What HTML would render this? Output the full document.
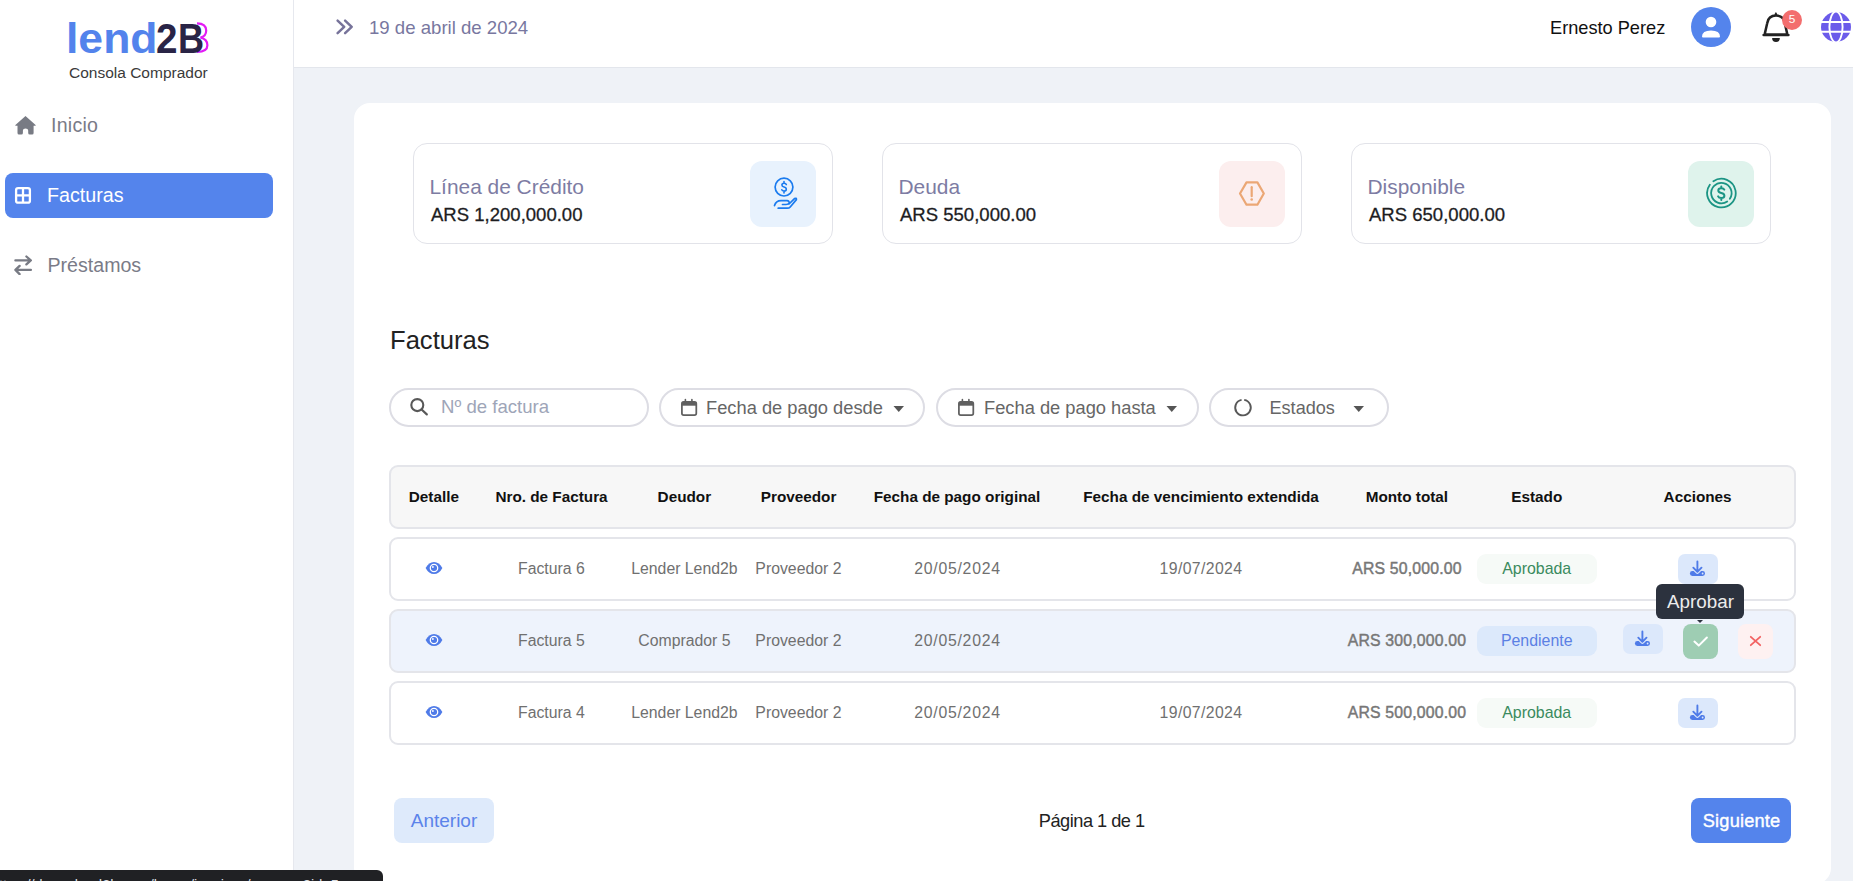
<!DOCTYPE html><html><head><meta charset="utf-8"><style>
html,body{margin:0;padding:0}
body{width:1853px;height:881px;overflow:hidden;position:relative;background:#EFF2F7;font-family:"Liberation Sans",sans-serif}
.t{position:absolute;white-space:nowrap;line-height:1}
.r{position:absolute;display:block}
</style></head><body>
<div class="r" style="left:0px;top:0px;width:293px;height:881px;background:#fff;border-radius:0px;"></div>
<div class="r" style="left:293px;top:0px;width:1px;height:881px;background:#E6E8EE;border-radius:0px;"></div>
<div class="r" style="left:294px;top:0px;width:1559px;height:67px;background:#fff;border-radius:0px;"></div>
<div class="r" style="left:294px;top:67px;width:1559px;height:1px;background:#E3E6EC;border-radius:0px;"></div>
<div class="r" style="left:354px;top:103px;width:1477px;height:781px;background:#fff;border-radius:16px;"></div>
<div class="t" style="left:66.3px;top:17.85px;font-size:42px;color:#5383EC;font-weight:700;transform:scaleX(1.06);transform-origin:0 0;">lend</div>
<div class="t" style="left:155.5px;top:17.85px;font-size:42px;color:#292446;font-weight:700;transform:scaleX(0.92);transform-origin:0 0;">2</div>
<svg class="r" style="left:190px;top:18px;" width="22" height="40" viewBox="0 0 22 40"><path d="M7 5.3 Q16.2 5.5 16.2 12.4 Q16.2 18 10.5 19.6 Q17.4 21 17.4 27.3 Q17.4 33.8 7 34" fill="none" stroke="#E21BF5" stroke-width="2.2"/></svg>
<div class="t" style="left:177.5px;top:17.85px;font-size:42px;color:#292446;font-weight:700;transform:scaleX(0.86);transform-origin:0 0;">B</div>
<div class="t" style="left:69px;top:64.68px;font-size:15.5px;color:#3A3A3A;font-weight:400;">Consola Comprador</div>
<svg class="r" style="left:14px;top:115px;" width="24" height="21" viewBox="0 0 24 21"><path d="M11.5 1 L21.6 10 Q22.2 10.8 21.3 10.8 L19.6 10.8 L19.6 18 Q19.6 19.5 18.1 19.5 L15.7 19.5 Q14.2 19.5 14.2 18 L14.2 15.5 Q14.2 13.5 11.55 13.5 Q8.9 13.5 8.9 15.5 L8.9 18 Q8.9 19.5 7.4 19.5 L5 19.5 Q3.5 19.5 3.5 18 L3.5 10.8 L1.7 10.8 Q0.8 10.8 1.4 10 Z" fill="#787B84"/></svg>
<div class="t" style="left:51px;top:116.01px;font-size:19.6px;color:#7A7B87;font-weight:400;letter-spacing:0.25px;">Inicio</div>
<div class="r" style="left:5px;top:173px;width:268px;height:45px;background:#5484EC;border-radius:8px;"></div>
<svg class="r" style="left:14px;top:186px;" width="18" height="19" viewBox="0 0 18 19"><rect x="2.1" y="2.1" width="13.8" height="14.6" rx="2" fill="none" stroke="#fff" stroke-width="2.3"/><line x1="9" y1="2" x2="9" y2="17" stroke="#fff" stroke-width="2.3"/><line x1="2" y1="9.4" x2="16" y2="9.4" stroke="#fff" stroke-width="2.3"/></svg>
<div class="t" style="left:47px;top:185.92px;font-size:19.7px;color:#fff;font-weight:400;">Facturas</div>
<svg class="r" style="left:14px;top:255px;" width="19" height="20" viewBox="0 0 19 20"><path d="M1.4 5.4 H16.8 M12.4 1.5 L16.8 5.4 L12.4 9.4 M16.9 14.9 H1.4 M5.6 10.9 L1.4 14.9 L5.6 19.1" fill="none" stroke="#787B84" stroke-width="2.3" stroke-linecap="round" stroke-linejoin="round"/></svg>
<div class="t" style="left:47.5px;top:255.91px;font-size:19.6px;color:#7A7B87;font-weight:400;">Préstamos</div>
<svg class="r" style="left:334px;top:17px;" width="21" height="20" viewBox="0 0 21 20"><path d="M3.6 3.6 L10.2 9.9 L3.6 16.2 M11.1 3.6 L17.7 9.9 L11.1 16.2" fill="none" stroke="#77739A" stroke-width="2.5" stroke-linecap="round" stroke-linejoin="round"/></svg>
<div class="t" style="left:369px;top:18.86px;font-size:18.6px;color:#7877A0;font-weight:400;">19 de abril de 2024</div>
<div class="t" style="left:1550px;top:19.09px;font-size:18.2px;color:#111;font-weight:400;">Ernesto Perez</div>
<svg class="r" style="left:1691px;top:7px;" width="40" height="40" viewBox="0 0 40 40"><circle cx="20" cy="20" r="20" fill="#5484EC"/><circle cx="20" cy="15" r="5.3" fill="#fff"/><path d="M11 29.5 Q11 23.5 20 23.5 Q29 23.5 29 29.5 Q29 30.5 28 30.5 L12 30.5 Q11 30.5 11 29.5 Z" fill="#fff"/></svg>
<svg class="r" style="left:1760px;top:10px;" width="32" height="34" viewBox="0 0 32 34"><path d="M15.9 1.9 Q17.4 3.4 17.4 5.8 L14.4 5.8 Q14.4 3.4 15.9 1.9 Z" fill="#222"/><path d="M4.6 24.6 L7.2 13.2 Q8.4 5.6 16 5.6 Q23.6 5.6 24.8 13.2 L27.4 24.6 Z M3.6 24.9 H28.4" fill="none" stroke="#222" stroke-width="2.5" stroke-linejoin="round" stroke-linecap="round"/><path d="M12.1 28 H19.9 Q19.9 32 16 32 Q12.1 32 12.1 28 Z" fill="#222"/></svg>
<svg class="r" style="left:1782px;top:10px;" width="20" height="20" viewBox="0 0 20 20"><circle cx="10" cy="10" r="10" fill="#F36E6E"/></svg>
<div class="t" style="left:1792.00px;transform:translateX(-50%);top:14.21px;font-size:11.8px;color:#fff;font-weight:400;">5</div>
<svg class="r" style="left:1820px;top:11px;" width="32" height="32" viewBox="0 0 32 32"><circle cx="16" cy="16" r="15" fill="#6B5BEA"/><path d="M1 11 H31 M1 20.8 H31" stroke="#fff" stroke-width="1.9"/><ellipse cx="16" cy="16" rx="6.6" ry="15.5" fill="none" stroke="#fff" stroke-width="1.9"/></svg>
<div class="r" style="left:413px;top:142.5px;width:420px;height:101.0px;background:#fff;border-radius:14px;border:1.5px solid #E2E3E9;box-sizing:border-box;"></div>
<div class="t" style="left:429.5px;top:177.11px;font-size:20.9px;color:#7D7CA3;font-weight:400;">Línea de Crédito</div>
<div class="t" style="left:431px;top:205.90px;font-size:18.55px;color:#1D1D1F;font-weight:400;-webkit-text-stroke:0.3px #1D1D1F;">ARS 1,200,000.00</div>
<div class="r" style="left:750px;top:161px;width:66px;height:66px;background:#E8F2FD;border-radius:12px;"></div>
<div class="r" style="left:882px;top:142.5px;width:420px;height:101.0px;background:#fff;border-radius:14px;border:1.5px solid #E2E3E9;box-sizing:border-box;"></div>
<div class="t" style="left:898.5px;top:177.11px;font-size:20.9px;color:#7D7CA3;font-weight:400;">Deuda</div>
<div class="t" style="left:900px;top:205.90px;font-size:18.55px;color:#1D1D1F;font-weight:400;-webkit-text-stroke:0.3px #1D1D1F;">ARS 550,000.00</div>
<div class="r" style="left:1219px;top:161px;width:66px;height:66px;background:#FCEEEE;border-radius:12px;"></div>
<div class="r" style="left:1351px;top:142.5px;width:420px;height:101.0px;background:#fff;border-radius:14px;border:1.5px solid #E2E3E9;box-sizing:border-box;"></div>
<div class="t" style="left:1367.5px;top:177.11px;font-size:20.9px;color:#7D7CA3;font-weight:400;">Disponible</div>
<div class="t" style="left:1369px;top:205.90px;font-size:18.55px;color:#1D1D1F;font-weight:400;-webkit-text-stroke:0.3px #1D1D1F;">ARS 650,000.00</div>
<div class="r" style="left:1688px;top:161px;width:66px;height:66px;background:#DFF3EC;border-radius:12px;"></div>
<svg class="r" style="left:772px;top:175px;" width="26" height="36" viewBox="0 0 26 36"><circle cx="12" cy="12.1" r="8.9" fill="none" stroke="#1A7BEF" stroke-width="1.7"/><path d="M14.3 9.6 Q13.9 8.3 12 8.3 Q9.9 8.3 9.9 10.1 Q9.9 11.6 12 12 Q14.3 12.5 14.3 14.2 Q14.3 16 12 16 Q10.2 16 9.8 14.8 M12 6.6 V8.3 M12 16 V17.9" fill="none" stroke="#1A7BEF" stroke-width="1.6" stroke-linecap="round"/><path d="M2.5 30.6 Q4 25.7 9 25.7 L15 25.7 Q17.5 25.9 17 28 Q16.5 29.5 14 29.5 L10.5 29.5 M17 29 L22.5 23.6 Q24.6 22.5 24.4 24.6 L18.2 32 Q17.2 33.2 15.2 33.2 L6.2 33.2" fill="none" stroke="#1A7BEF" stroke-width="1.7" stroke-linecap="round" stroke-linejoin="round"/></svg>
<svg class="r" style="left:1238px;top:180px;" width="28" height="28" viewBox="0 0 28 28"><path d="M8.5 2.4 L19.4 2.4 L25.8 13.55 L19.4 24.7 L8.5 24.7 L2 13.55 Z" fill="none" stroke="#EBA775" stroke-width="2.2" stroke-linejoin="round"/><path d="M13.7 7.2 V16.2" stroke="#EBA775" stroke-width="2.2" stroke-linecap="round"/><circle cx="13.7" cy="19.5" r="1.3" fill="#EBA775"/></svg>
<svg class="r" style="left:1705px;top:177px;" width="32" height="32" viewBox="0 0 32 32"><path d="M8.40 4.24 A14.3 14.3 0 1 1 4.83 7.69" fill="none" stroke="#1B9484" stroke-width="1.8" stroke-linecap="round"/><path d="M22.25 24.46 A10.2 10.2 0 1 1 24.86 21.80" fill="none" stroke="#1B9484" stroke-width="1.8" stroke-linecap="round"/><path d="M19.3 12.6 Q18.7 11.2 16.3 11.2 Q13.3 11.2 13.3 13.5 Q13.3 15.3 16.3 15.9 Q19.4 16.5 19.4 18.7 Q19.4 20.9 16.3 20.9 Q13.8 20.9 13.1 19.3 M16.3 9.5 V11.2 M16.3 20.9 V22.9" fill="none" stroke="#1B9484" stroke-width="2" stroke-linecap="round"/></svg>
<div class="t" style="left:390px;top:327.73px;font-size:25.6px;color:#222;font-weight:400;">Facturas</div>
<div class="r" style="left:389px;top:388px;width:260px;height:39px;background:#fff;border-radius:20px;border:2px solid #DDDDE4;box-sizing:border-box;"></div>
<div class="r" style="left:659px;top:388px;width:266px;height:39px;background:#fff;border-radius:20px;border:2px solid #DDDDE4;box-sizing:border-box;"></div>
<div class="r" style="left:936px;top:388px;width:263px;height:39px;background:#fff;border-radius:20px;border:2px solid #DDDDE4;box-sizing:border-box;"></div>
<div class="r" style="left:1209px;top:388px;width:180px;height:39px;background:#fff;border-radius:20px;border:2px solid #DDDDE4;box-sizing:border-box;"></div>
<svg class="r" style="left:409px;top:397px;" width="21" height="20" viewBox="0 0 21 20"><circle cx="8.3" cy="8.1" r="6" fill="none" stroke="#585858" stroke-width="2.1"/><path d="M12.6 12.5 L17.8 17.4" stroke="#585858" stroke-width="2.2" stroke-linecap="round"/></svg>
<div class="t" style="left:441px;top:398.46px;font-size:18.6px;color:#9EA5B8;font-weight:400;">Nº de factura</div>
<svg class="r" style="left:680px;top:398px;" width="18" height="19" viewBox="0 0 18 19"><rect x="1.9" y="3.9" width="14.4" height="13.2" rx="1.8" fill="none" stroke="#606060" stroke-width="1.75"/><rect x="1.9" y="3.9" width="14.4" height="3.8" fill="#606060"/><path d="M5.4 1.6 V4.2 M11.9 1.6 V4.2" stroke="#606060" stroke-width="1.6" stroke-linecap="round"/></svg>
<div class="t" style="left:706px;top:398.81px;font-size:18.3px;color:#666;font-weight:400;">Fecha de pago desde</div>
<svg class="r" style="left:893px;top:405px;" width="12" height="8" viewBox="0 0 12 8"><path d="M0.5 1 L11 1 L5.75 7 Z" fill="#555"/></svg>
<svg class="r" style="left:956.5px;top:398px;" width="18" height="19" viewBox="0 0 18 19"><rect x="1.9" y="3.9" width="14.4" height="13.2" rx="1.8" fill="none" stroke="#606060" stroke-width="1.75"/><rect x="1.9" y="3.9" width="14.4" height="3.8" fill="#606060"/><path d="M5.4 1.6 V4.2 M11.9 1.6 V4.2" stroke="#606060" stroke-width="1.6" stroke-linecap="round"/></svg>
<div class="t" style="left:984px;top:398.81px;font-size:18.3px;color:#666;font-weight:400;">Fecha de pago hasta</div>
<svg class="r" style="left:1166px;top:405px;" width="12" height="8" viewBox="0 0 12 8"><path d="M0.5 1 L11 1 L5.75 7 Z" fill="#555"/></svg>
<svg class="r" style="left:1233px;top:398px;" width="20" height="20" viewBox="0 0 20 20"><path d="M11.22 1.90 A7.8 7.8 0 1 1 8.57 1.93" fill="none" stroke="#585858" stroke-width="1.9"/></svg>
<div class="t" style="left:1269.5px;top:399.18px;font-size:18.1px;color:#666;font-weight:400;">Estados</div>
<svg class="r" style="left:1353px;top:405px;" width="12" height="8" viewBox="0 0 12 8"><path d="M0.5 1 L11 1 L5.75 7 Z" fill="#555"/></svg>
<div class="r" style="left:389px;top:465px;width:1407px;height:64px;background:#F7F7F7;border-radius:9px;border:2px solid #E4E5EA;box-sizing:border-box;"></div>
<div class="t" style="left:433.90px;transform:translateX(-50%);top:489.25px;font-size:15.3px;color:#111;font-weight:700;">Detalle</div>
<div class="t" style="left:551.50px;transform:translateX(-50%);top:489.25px;font-size:15.3px;color:#111;font-weight:700;">Nro. de Factura</div>
<div class="t" style="left:684.40px;transform:translateX(-50%);top:489.25px;font-size:15.3px;color:#111;font-weight:700;">Deudor</div>
<div class="t" style="left:798.60px;transform:translateX(-50%);top:489.25px;font-size:15.3px;color:#111;font-weight:700;">Proveedor</div>
<div class="t" style="left:957.00px;transform:translateX(-50%);top:489.25px;font-size:15.3px;color:#111;font-weight:700;">Fecha de pago original</div>
<div class="t" style="left:1201.00px;transform:translateX(-50%);top:489.25px;font-size:15.3px;color:#111;font-weight:700;">Fecha de vencimiento extendida</div>
<div class="t" style="left:1406.90px;transform:translateX(-50%);top:489.25px;font-size:15.3px;color:#111;font-weight:700;">Monto total</div>
<div class="t" style="left:1536.80px;transform:translateX(-50%);top:489.25px;font-size:15.3px;color:#111;font-weight:700;">Estado</div>
<div class="t" style="left:1697.60px;transform:translateX(-50%);top:489.25px;font-size:15.3px;color:#111;font-weight:700;">Acciones</div>
<div class="r" style="left:389px;top:537px;width:1407px;height:64px;background:#fff;border-radius:9px;border:2px solid #E4E5EA;box-sizing:border-box;"></div>
<svg class="r" style="left:424.5px;top:561.4px;" width="18" height="14" viewBox="0 0 18 14"><path d="M0.6 7 Q3.8 0.9 9 0.9 Q14.2 0.9 17.4 7 Q14.2 13.1 9 13.1 Q3.8 13.1 0.6 7 Z" fill="#4F7BE8"/><circle cx="9" cy="7" r="3.7" fill="none" stroke="#fff" stroke-width="1.3"/><circle cx="9" cy="7" r="2.5" fill="#4F7BE8"/><circle cx="7.9" cy="6" r="0.9" fill="#fff"/></svg>
<div class="t" style="left:551.40px;transform:translateX(-50%);top:560.53px;font-size:15.8px;color:#707070;font-weight:400;">Factura 6</div>
<div class="t" style="left:684.40px;transform:translateX(-50%);top:560.53px;font-size:15.8px;color:#707070;font-weight:400;">Lender Lend2b</div>
<div class="t" style="left:798.40px;transform:translateX(-50%);top:560.53px;font-size:15.8px;color:#707070;font-weight:400;">Proveedor 2</div>
<div class="t" style="left:957.48px;transform:translateX(-50%);top:560.53px;font-size:15.8px;color:#707070;font-weight:400;letter-spacing:0.75px;">20/05/2024</div>
<div class="t" style="left:1200.99px;transform:translateX(-50%);top:560.53px;font-size:15.8px;color:#707070;font-weight:400;letter-spacing:0.38px;">19/07/2024</div>
<div class="t" style="left:1406.99px;transform:translateX(-50%);top:560.53px;font-size:15.8px;color:#777;font-weight:400;letter-spacing:0.18px;-webkit-text-stroke:0.45px #777;">ARS 50,000.00</div>
<div class="r" style="left:1477px;top:554px;width:120px;height:30px;background:#F6FAF7;border-radius:9px;"></div>
<div class="t" style="left:1536.70px;transform:translateX(-50%);top:561.44px;font-size:15.9px;color:#3A8A5E;font-weight:400;">Aprobada</div>
<svg class="r" style="left:1678px;top:554px;" width="40" height="30" viewBox="0 0 40 30"><rect width="40" height="30" rx="7" fill="#DCE8FB"/><rect x="11.9" y="17.1" width="15.1" height="4.8" rx="2.4" fill="#4F7BE8"/><path d="M15.1 13.6 L19.4 17.9 L23.7 13.6" fill="none" stroke="#DCE8FB" stroke-width="4" stroke-linecap="round" stroke-linejoin="round"/><path d="M19.4 7.4 V17.4 M15.3 13.7 L19.4 17.8 L23.5 13.7" fill="none" stroke="#4F7BE8" stroke-width="1.9" stroke-linecap="round" stroke-linejoin="round"/><circle cx="24.6" cy="19.5" r="0.9" fill="#DCE8FB"/></svg>
<div class="r" style="left:389px;top:609px;width:1407px;height:64px;background:#EEF3FC;border-radius:9px;border:2px solid #E4E5EA;box-sizing:border-box;"></div>
<svg class="r" style="left:424.5px;top:633.4px;" width="18" height="14" viewBox="0 0 18 14"><path d="M0.6 7 Q3.8 0.9 9 0.9 Q14.2 0.9 17.4 7 Q14.2 13.1 9 13.1 Q3.8 13.1 0.6 7 Z" fill="#4F7BE8"/><circle cx="9" cy="7" r="3.7" fill="none" stroke="#fff" stroke-width="1.3"/><circle cx="9" cy="7" r="2.5" fill="#4F7BE8"/><circle cx="7.9" cy="6" r="0.9" fill="#fff"/></svg>
<div class="t" style="left:551.40px;transform:translateX(-50%);top:632.53px;font-size:15.8px;color:#707070;font-weight:400;">Factura 5</div>
<div class="t" style="left:684.40px;transform:translateX(-50%);top:632.53px;font-size:15.8px;color:#707070;font-weight:400;">Comprador 5</div>
<div class="t" style="left:798.40px;transform:translateX(-50%);top:632.53px;font-size:15.8px;color:#707070;font-weight:400;">Proveedor 2</div>
<div class="t" style="left:957.48px;transform:translateX(-50%);top:632.53px;font-size:15.8px;color:#707070;font-weight:400;letter-spacing:0.75px;">20/05/2024</div>
<div class="t" style="left:1406.99px;transform:translateX(-50%);top:632.53px;font-size:15.8px;color:#777;font-weight:400;letter-spacing:0.18px;-webkit-text-stroke:0.45px #777;">ARS 300,000.00</div>
<div class="r" style="left:1477px;top:626px;width:120px;height:30px;background:#DCE9FB;border-radius:9px;"></div>
<div class="t" style="left:1536.70px;transform:translateX(-50%);top:633.44px;font-size:15.9px;color:#5B80E4;font-weight:400;">Pendiente</div>
<svg class="r" style="left:1623px;top:624px;" width="40" height="30" viewBox="0 0 40 30"><rect width="40" height="30" rx="7" fill="#DCE8FB"/><rect x="11.9" y="17.1" width="15.1" height="4.8" rx="2.4" fill="#4F7BE8"/><path d="M15.1 13.6 L19.4 17.9 L23.7 13.6" fill="none" stroke="#DCE8FB" stroke-width="4" stroke-linecap="round" stroke-linejoin="round"/><path d="M19.4 7.4 V17.4 M15.3 13.7 L19.4 17.8 L23.5 13.7" fill="none" stroke="#4F7BE8" stroke-width="1.9" stroke-linecap="round" stroke-linejoin="round"/><circle cx="24.6" cy="19.5" r="0.9" fill="#DCE8FB"/></svg>
<div class="r" style="left:1683px;top:624px;width:35px;height:35px;background:#9ECDB3;border-radius:8px;"></div>
<svg class="r" style="left:1692px;top:635px;" width="17" height="13" viewBox="0 0 17 13"><path d="M2.4 6.6 L6.75 10.6 L14.9 2.5" fill="none" stroke="#fff" stroke-width="2" stroke-linecap="round" stroke-linejoin="round"/></svg>
<div class="r" style="left:1738px;top:624px;width:35px;height:35px;background:#FEF1F1;border-radius:8px;"></div>
<svg class="r" style="left:1749px;top:635px;" width="13" height="12" viewBox="0 0 13 12"><path d="M1.8 1.8 L11.2 10.2 M11.2 1.8 L1.8 10.2" fill="none" stroke="#F26262" stroke-width="1.8" stroke-linecap="round"/></svg>
<div class="r" style="left:389px;top:681px;width:1407px;height:64px;background:#fff;border-radius:9px;border:2px solid #E4E5EA;box-sizing:border-box;"></div>
<svg class="r" style="left:424.5px;top:705.4px;" width="18" height="14" viewBox="0 0 18 14"><path d="M0.6 7 Q3.8 0.9 9 0.9 Q14.2 0.9 17.4 7 Q14.2 13.1 9 13.1 Q3.8 13.1 0.6 7 Z" fill="#4F7BE8"/><circle cx="9" cy="7" r="3.7" fill="none" stroke="#fff" stroke-width="1.3"/><circle cx="9" cy="7" r="2.5" fill="#4F7BE8"/><circle cx="7.9" cy="6" r="0.9" fill="#fff"/></svg>
<div class="t" style="left:551.40px;transform:translateX(-50%);top:704.53px;font-size:15.8px;color:#707070;font-weight:400;">Factura 4</div>
<div class="t" style="left:684.40px;transform:translateX(-50%);top:704.53px;font-size:15.8px;color:#707070;font-weight:400;">Lender Lend2b</div>
<div class="t" style="left:798.40px;transform:translateX(-50%);top:704.53px;font-size:15.8px;color:#707070;font-weight:400;">Proveedor 2</div>
<div class="t" style="left:957.48px;transform:translateX(-50%);top:704.53px;font-size:15.8px;color:#707070;font-weight:400;letter-spacing:0.75px;">20/05/2024</div>
<div class="t" style="left:1200.99px;transform:translateX(-50%);top:704.53px;font-size:15.8px;color:#707070;font-weight:400;letter-spacing:0.38px;">19/07/2024</div>
<div class="t" style="left:1406.99px;transform:translateX(-50%);top:704.53px;font-size:15.8px;color:#777;font-weight:400;letter-spacing:0.18px;-webkit-text-stroke:0.45px #777;">ARS 500,000.00</div>
<div class="r" style="left:1477px;top:698px;width:120px;height:30px;background:#F6FAF7;border-radius:9px;"></div>
<div class="t" style="left:1536.70px;transform:translateX(-50%);top:705.44px;font-size:15.9px;color:#3A8A5E;font-weight:400;">Aprobada</div>
<svg class="r" style="left:1678px;top:698px;" width="40" height="30" viewBox="0 0 40 30"><rect width="40" height="30" rx="7" fill="#DCE8FB"/><rect x="11.9" y="17.1" width="15.1" height="4.8" rx="2.4" fill="#4F7BE8"/><path d="M15.1 13.6 L19.4 17.9 L23.7 13.6" fill="none" stroke="#DCE8FB" stroke-width="4" stroke-linecap="round" stroke-linejoin="round"/><path d="M19.4 7.4 V17.4 M15.3 13.7 L19.4 17.8 L23.5 13.7" fill="none" stroke="#4F7BE8" stroke-width="1.9" stroke-linecap="round" stroke-linejoin="round"/><circle cx="24.6" cy="19.5" r="0.9" fill="#DCE8FB"/></svg>
<div class="r" style="left:1656px;top:584px;width:88px;height:35px;background:#2C323E;border-radius:6px;"></div>
<svg class="r" style="left:1697px;top:620px;" width="6" height="3" viewBox="0 0 6 3"><path d="M0 0 L6 0 L3 3 Z" fill="#2C323E"/></svg>
<div class="t" style="left:1700.50px;transform:translateX(-50%);top:592.89px;font-size:18.8px;color:#ECECEC;font-weight:400;">Aprobar</div>
<div class="r" style="left:394px;top:798px;width:100px;height:45px;background:#DEEAFB;border-radius:8px;"></div>
<div class="t" style="left:444.00px;transform:translateX(-50%);top:810.62px;font-size:19px;color:#5B83EA;font-weight:400;">Anterior</div>
<div class="t" style="left:1091.75px;transform:translateX(-50%);top:811.89px;font-size:18.2px;color:#222;font-weight:400;letter-spacing:-0.5px;">Página 1 de 1</div>
<div class="r" style="left:1691px;top:798px;width:100px;height:45px;background:#5484EC;border-radius:8px;"></div>
<div class="t" style="left:1741.60px;transform:translateX(-50%);top:811.89px;font-size:18.2px;color:#fff;font-weight:400;letter-spacing:0.2px;-webkit-text-stroke:0.4px #fff;">Siguiente</div>
<div class="r" style="left:0px;top:870px;width:383px;height:30px;background:#202124;border-radius:6px;border-top-left-radius:0;"></div>
<div class="t" style="left:-1px;top:877.73px;font-size:14.5px;color:#DADCE0;font-weight:400;">ttps://demo.lend2b.com/buyer/invoices/approve?id=5</div>
</body></html>
